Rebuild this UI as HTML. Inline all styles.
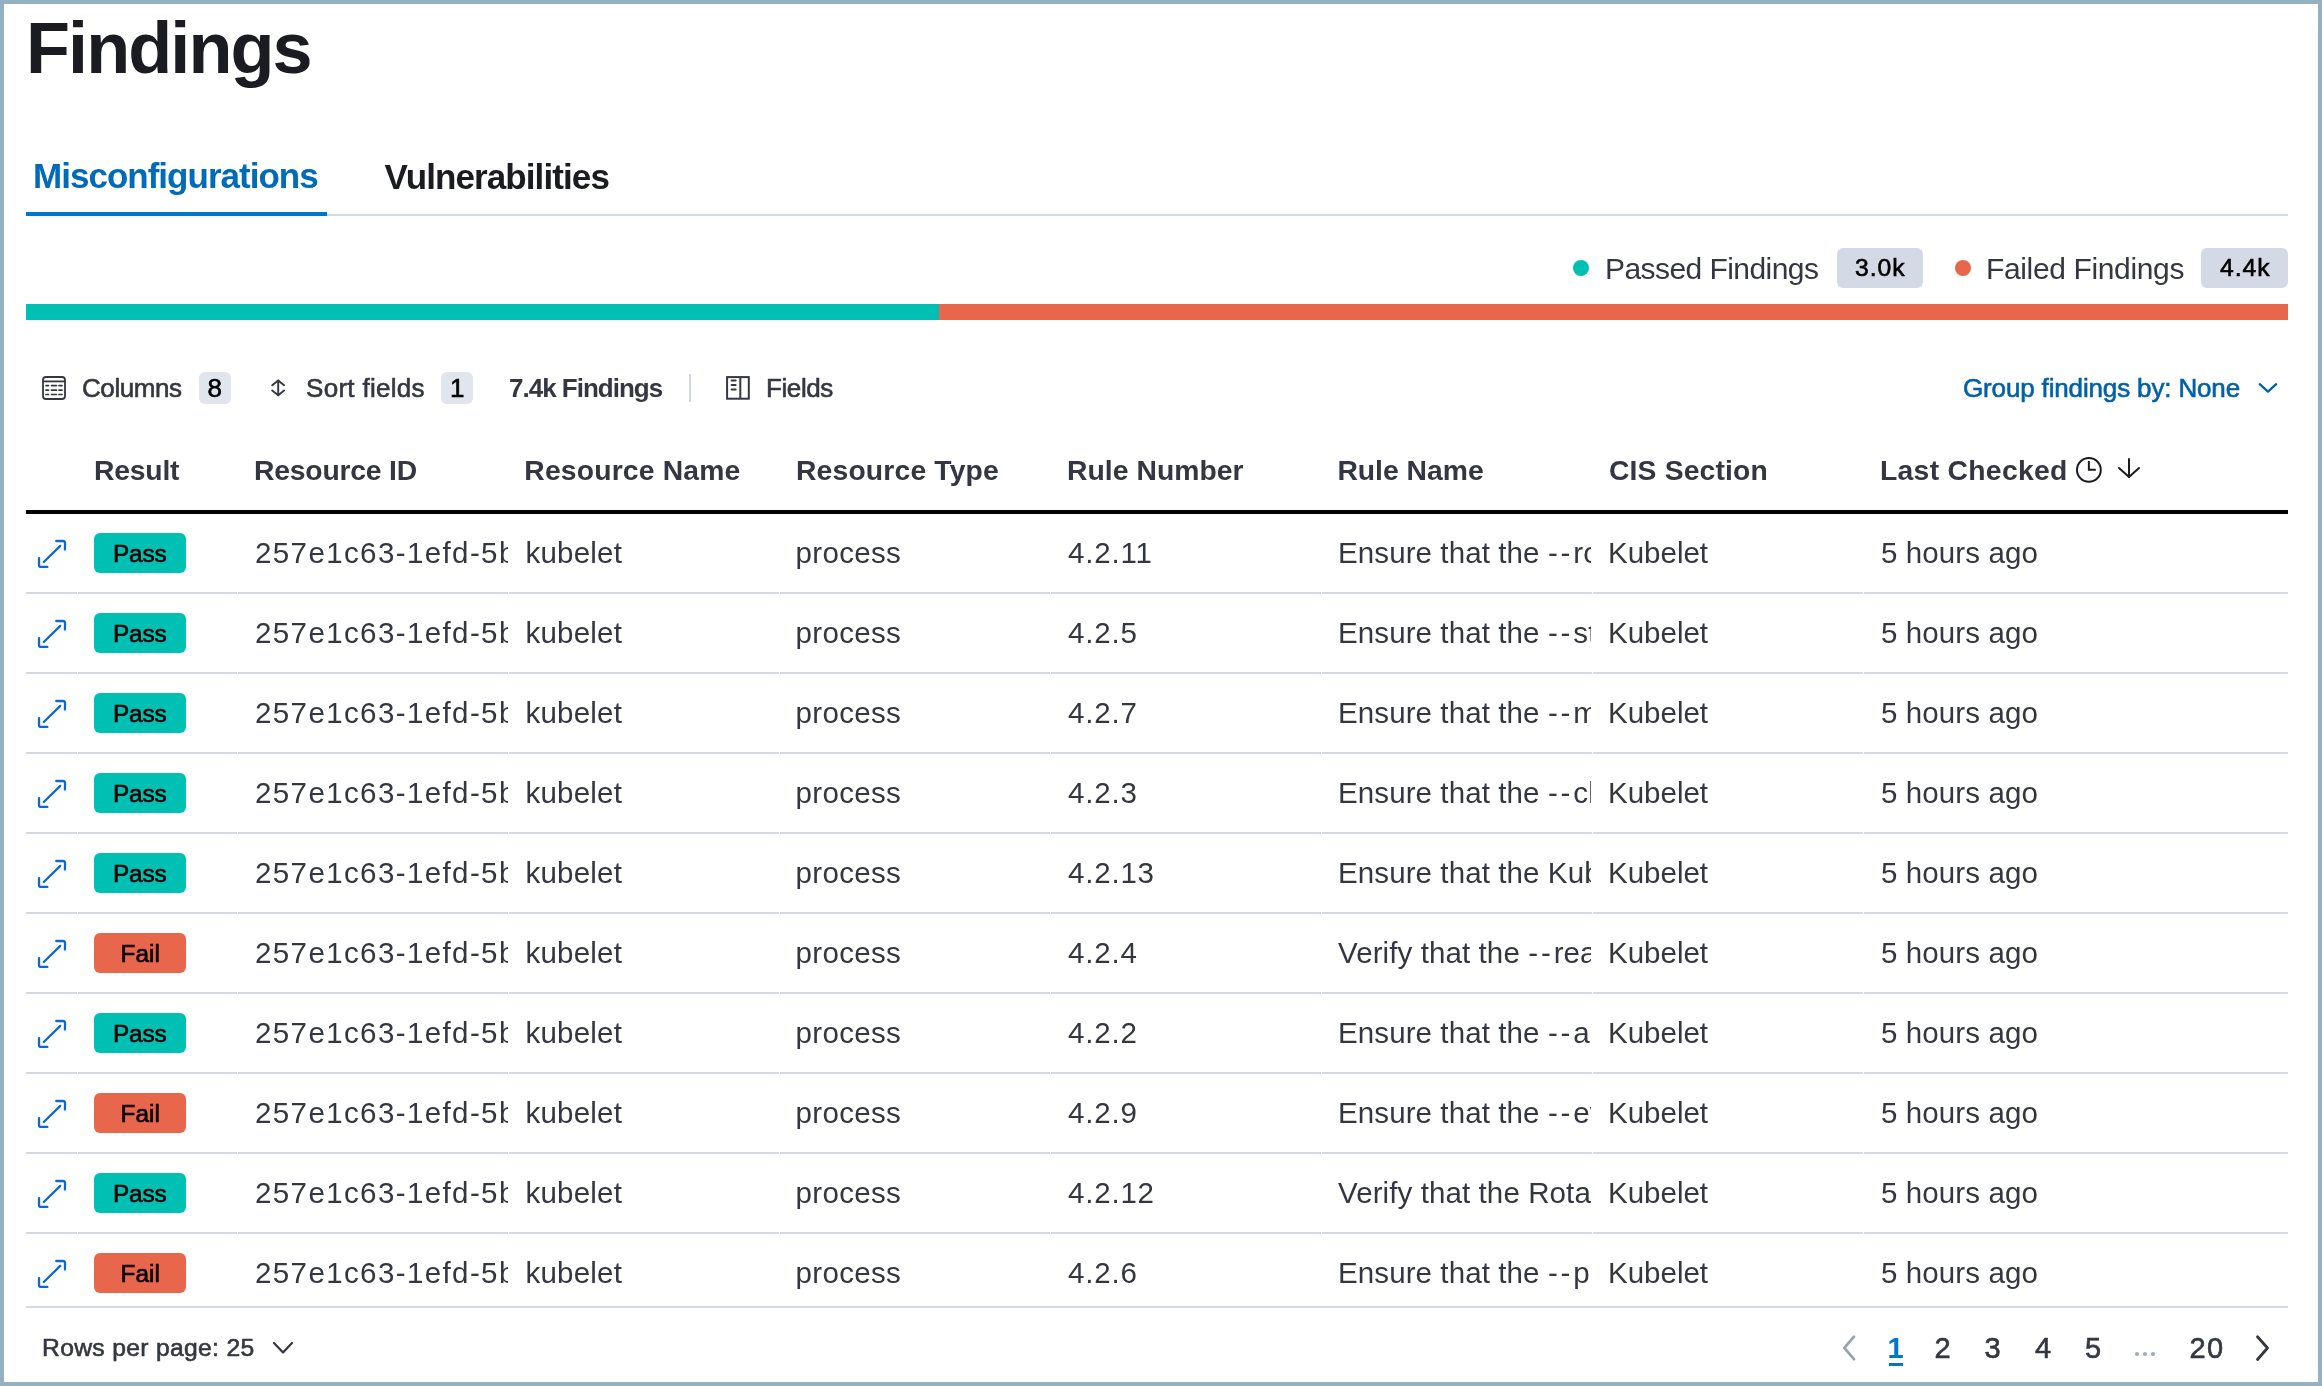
<!DOCTYPE html>
<html><head><meta charset="utf-8"><title>Findings</title>
<style>
html,body{margin:0;padding:0;background:#fff;}
body{width:2322px;height:1386px;position:relative;overflow:hidden;font-family:"Liberation Sans",sans-serif;}
.t{position:absolute;white-space:nowrap;}
.r{position:absolute;}
.clip{position:absolute;overflow:hidden;}
.frame{position:absolute;left:0;top:0;width:2314px;height:1378px;border:4px solid #94b1bf;pointer-events:none;}
</style></head><body>
<div style="position:absolute;left:0;top:0;width:2322px;height:1386px;will-change:transform">
<div class="t" style="left:26.0px;top:11.7px;font-size:72px;line-height:72px;font-weight:700;color:#1a1c21;letter-spacing:-1.9px;">Findings</div>
<div class="t" style="left:33.0px;top:158.4px;font-size:35px;line-height:35px;font-weight:700;color:#006bb8;letter-spacing:-0.98px;">Misconfigurations</div>
<div class="t" style="left:384.5px;top:158.8px;font-size:35px;line-height:35px;font-weight:700;color:#1a1c21;letter-spacing:-0.9px;">Vulnerabilities</div>
<div class="r" style="left:327px;top:214px;width:1961px;height:2px;background:#d3dae6;"></div>
<div class="r" style="left:26px;top:212px;width:301px;height:4px;background:#0077cc;"></div>
<div class="r" style="left:1573px;top:260px;width:16px;height:16px;border-radius:8px;background:#00bfb3"></div>
<div class="t" style="left:1605.0px;top:253.9px;font-size:30px;line-height:30px;font-weight:400;color:#343741;letter-spacing:-0.56px;">Passed Findings</div>
<div class="r" style="left:1837px;top:248px;width:86px;height:40px;background:#d3dae6;border-radius:6px"></div>
<div class="t" style="left:1855.0px;top:256.1px;font-size:24.7px;line-height:24.7px;font-weight:400;color:#000;letter-spacing:1px;-webkit-text-stroke:0.6px currentColor;">3.0k</div>
<div class="r" style="left:1955px;top:260px;width:16px;height:16px;border-radius:8px;background:#e7664c"></div>
<div class="t" style="left:1986.0px;top:253.9px;font-size:30px;line-height:30px;font-weight:400;color:#343741;letter-spacing:-0.36px;">Failed Findings</div>
<div class="r" style="left:2201px;top:248px;width:87px;height:40px;background:#d3dae6;border-radius:6px"></div>
<div class="t" style="left:2220.0px;top:256.1px;font-size:24.7px;line-height:24.7px;font-weight:400;color:#000;letter-spacing:1px;-webkit-text-stroke:0.6px currentColor;">4.4k</div>
<div class="r" style="left:26px;top:304px;width:913px;height:16px;background:#00bfb3;"></div>
<div class="r" style="left:939px;top:304px;width:1349px;height:16px;background:#e7664c;"></div>
<svg class="r" style="left:40px;top:374px" width="28" height="28" viewBox="0 0 28 28" fill="none" stroke="#343741" stroke-width="2">
<rect x="3" y="3" width="22" height="22" rx="3" stroke-width="1.8"/><line x1="3" y1="7.4" x2="25" y2="7.4" stroke-width="1.8"/>
<g stroke-width="1.7" stroke-linecap="round"><line x1="6" y1="11.6" x2="8.5" y2="11.6"/><line x1="11.5" y1="11.6" x2="16.5" y2="11.6"/><line x1="19" y1="11.6" x2="22" y2="11.6"/>
<line x1="6" y1="16.1" x2="8.5" y2="16.1"/><line x1="11.5" y1="16.1" x2="16.5" y2="16.1"/><line x1="19" y1="16.1" x2="22" y2="16.1"/>
<line x1="6" y1="20.5" x2="8.5" y2="20.5"/><line x1="11.5" y1="20.5" x2="16.5" y2="20.5"/><line x1="19" y1="20.5" x2="22" y2="20.5"/></g></svg>
<div class="t" style="left:82.0px;top:375.0px;font-size:26px;line-height:26px;font-weight:400;color:#343741;letter-spacing:-0.43px;-webkit-text-stroke:0.6px currentColor;">Columns</div>
<div class="r" style="left:199px;top:372px;width:32px;height:32px;background:#e0e5ee;border-radius:6px"></div>
<div class="t" style="left:207.5px;top:375.0px;font-size:26px;line-height:26px;font-weight:400;color:#000;letter-spacing:0px;-webkit-text-stroke:0.6px currentColor;">8</div>
<svg class="r" style="left:264px;top:374px" width="28" height="28" viewBox="0 0 28 28" fill="none" stroke="#343741" stroke-width="1.9" stroke-linecap="round" stroke-linejoin="round">
<polyline points="8.2,11.2 14.2,6.4 20.1,11.2"/><polyline points="8.2,16.4 14.2,21.2 20.1,16.4"/><line x1="14.2" y1="6.4" x2="14.2" y2="21.2"/></svg>
<div class="t" style="left:306.0px;top:375.0px;font-size:26px;line-height:26px;font-weight:400;color:#343741;letter-spacing:0.3px;-webkit-text-stroke:0.6px currentColor;">Sort fields</div>
<div class="r" style="left:441px;top:372px;width:32px;height:32px;background:#e0e5ee;border-radius:6px"></div>
<div class="t" style="left:450.0px;top:375.0px;font-size:26px;line-height:26px;font-weight:400;color:#000;letter-spacing:0px;-webkit-text-stroke:0.6px currentColor;">1</div>
<div class="t" style="left:509.0px;top:375.0px;font-size:26px;line-height:26px;font-weight:700;color:#343741;letter-spacing:-1px;">7.4k Findings</div>
<div class="r" style="left:689px;top:374px;width:2px;height:28px;background:#d3dae6;"></div>
<svg class="r" style="left:724px;top:374px" width="28" height="28" viewBox="0 0 28 28" fill="none" stroke="#343741" stroke-width="2">
<rect x="3.1" y="3.1" width="21.7" height="21.6"/><line x1="16.3" y1="3.1" x2="16.3" y2="24.7"/>
<g stroke-linecap="round"><line x1="7.6" y1="6.6" x2="11.6" y2="6.6"/><line x1="7.6" y1="10.9" x2="11.6" y2="10.9"/><line x1="7.6" y1="15.4" x2="11.6" y2="15.4"/></g></svg>
<div class="t" style="left:766.0px;top:375.0px;font-size:26px;line-height:26px;font-weight:400;color:#343741;letter-spacing:-0.4px;-webkit-text-stroke:0.6px currentColor;">Fields</div>
<div class="t" style="left:1963.0px;top:375.0px;font-size:26px;line-height:26px;font-weight:400;color:#0061a6;letter-spacing:-0.15px;-webkit-text-stroke:0.6px currentColor;">Group findings by: None</div>
<svg class="r" style="left:2250px;top:372px" width="40" height="32" viewBox="0 0 40 32" fill="none" stroke="#0061a6" stroke-width="2.3" stroke-linecap="round" stroke-linejoin="round">
<polyline points="9.7,12.2 18,19.6 26.2,12.2"/></svg>
<div class="t" style="left:94.0px;top:456.0px;font-size:28.3px;line-height:28.3px;font-weight:700;color:#343741;letter-spacing:-0.2px;">Result</div>
<div class="t" style="left:254.0px;top:456.0px;font-size:28.3px;line-height:28.3px;font-weight:700;color:#343741;letter-spacing:-0.2px;">Resource ID</div>
<div class="t" style="left:524.3px;top:456.0px;font-size:28.3px;line-height:28.3px;font-weight:700;color:#343741;letter-spacing:0.17px;">Resource Name</div>
<div class="t" style="left:796.0px;top:456.0px;font-size:28.3px;line-height:28.3px;font-weight:700;color:#343741;letter-spacing:0.17px;">Resource Type</div>
<div class="t" style="left:1067.0px;top:456.0px;font-size:28.3px;line-height:28.3px;font-weight:700;color:#343741;letter-spacing:0.05px;">Rule Number</div>
<div class="t" style="left:1337.4px;top:456.0px;font-size:28.3px;line-height:28.3px;font-weight:700;color:#343741;letter-spacing:0px;">Rule Name</div>
<div class="t" style="left:1609.0px;top:456.0px;font-size:28.3px;line-height:28.3px;font-weight:700;color:#343741;letter-spacing:0.15px;">CIS Section</div>
<div class="t" style="left:1880.0px;top:456.0px;font-size:28.3px;line-height:28.3px;font-weight:700;color:#343741;letter-spacing:0.3px;">Last Checked</div>
<svg class="r" style="left:2070px;top:450px" width="80" height="40" viewBox="0 0 80 40" fill="none" stroke="#1a1c21" stroke-width="2">
<circle cx="18.9" cy="19.9" r="11.9"/><polyline points="18.9,11 18.9,19.8 25.8,19.8" stroke-width="2"/>
<g stroke="#1a1c21" stroke-width="2" stroke-linecap="round" stroke-linejoin="round"><line x1="59" y1="9" x2="59" y2="27"/><polyline points="49,18 59,27 69,18"/></g></svg>
<div class="r" style="left:26px;top:510px;width:2262px;height:4px;background:#000;"></div>
<div class="r" style="left:26px;top:592px;width:51px;height:2px;background:#d3dae6;"></div>
<div class="r" style="left:78px;top:592px;width:159px;height:2px;background:#d3dae6;"></div>
<div class="r" style="left:238px;top:592px;width:270px;height:2px;background:#d3dae6;"></div>
<div class="r" style="left:509px;top:592px;width:270px;height:2px;background:#d3dae6;"></div>
<div class="r" style="left:780px;top:592px;width:270px;height:2px;background:#d3dae6;"></div>
<div class="r" style="left:1051px;top:592px;width:270px;height:2px;background:#d3dae6;"></div>
<div class="r" style="left:1322px;top:592px;width:270px;height:2px;background:#d3dae6;"></div>
<div class="r" style="left:1593px;top:592px;width:270px;height:2px;background:#d3dae6;"></div>
<div class="r" style="left:1864px;top:592px;width:424px;height:2px;background:#d3dae6;"></div>
<svg class="r" style="left:32px;top:530px" width="40" height="46" viewBox="0 0 40 46" fill="none" stroke="#0b6bcb" stroke-width="2.3" stroke-linecap="round" stroke-linejoin="round">
<path d="M24.3 11 H31 Q33 11 33 13 V19.6"/><path d="M7 28.2 V34.9 Q7 36.9 9 36.9 H15.4"/><line x1="11.8" y1="32" x2="28.2" y2="15.9"/></svg>
<div class="r" style="left:94px;top:533px;width:92px;height:40px;background:#00bfb3;border-radius:6px"></div>
<div class="t" style="left:113.0px;top:541.6px;font-size:24.4px;line-height:24.4px;font-weight:400;color:#000;letter-spacing:-0.15px;-webkit-text-stroke:0.6px #000;">Pass</div>
<div class="clip" style="left:237px;top:514px;width:271px;height:78px">
<div class="t" style="left:18.0px;top:23.7px;font-size:29.5px;line-height:29.5px;font-weight:400;color:#343741;letter-spacing:1.39px;">257e1c63-1efd-5b1f-9f6b-0123456789ab</div>
</div>
<div class="t" style="left:525.5px;top:537.7px;font-size:29.5px;line-height:29.5px;font-weight:400;color:#343741;letter-spacing:0.2px;">kubelet</div>
<div class="t" style="left:795.5px;top:537.7px;font-size:29.5px;line-height:29.5px;font-weight:400;color:#343741;letter-spacing:0.33px;">process</div>
<div class="t" style="left:1068.0px;top:537.7px;font-size:29.5px;line-height:29.5px;font-weight:400;color:#343741;letter-spacing:0.8px;">4.2.11</div>
<div class="clip" style="left:1321px;top:514px;width:270px;height:78px">
<div class="t" style="left:17.0px;top:23.7px;font-size:29.5px;line-height:29.5px;font-weight:400;color:#343741;letter-spacing:0.1px;">Ensure that the <span style="letter-spacing:2.9px">--</span>rotate-certificates argument is not set to false</div>
</div>
<div class="t" style="left:1608.0px;top:537.7px;font-size:29.5px;line-height:29.5px;font-weight:400;color:#343741;letter-spacing:0px;">Kubelet</div>
<div class="t" style="left:1881.0px;top:537.7px;font-size:29.5px;line-height:29.5px;font-weight:400;color:#343741;letter-spacing:0.1px;">5 hours ago</div>
<div class="r" style="left:26px;top:672px;width:51px;height:2px;background:#d3dae6;"></div>
<div class="r" style="left:78px;top:672px;width:159px;height:2px;background:#d3dae6;"></div>
<div class="r" style="left:238px;top:672px;width:270px;height:2px;background:#d3dae6;"></div>
<div class="r" style="left:509px;top:672px;width:270px;height:2px;background:#d3dae6;"></div>
<div class="r" style="left:780px;top:672px;width:270px;height:2px;background:#d3dae6;"></div>
<div class="r" style="left:1051px;top:672px;width:270px;height:2px;background:#d3dae6;"></div>
<div class="r" style="left:1322px;top:672px;width:270px;height:2px;background:#d3dae6;"></div>
<div class="r" style="left:1593px;top:672px;width:270px;height:2px;background:#d3dae6;"></div>
<div class="r" style="left:1864px;top:672px;width:424px;height:2px;background:#d3dae6;"></div>
<svg class="r" style="left:32px;top:610px" width="40" height="46" viewBox="0 0 40 46" fill="none" stroke="#0b6bcb" stroke-width="2.3" stroke-linecap="round" stroke-linejoin="round">
<path d="M24.3 11 H31 Q33 11 33 13 V19.6"/><path d="M7 28.2 V34.9 Q7 36.9 9 36.9 H15.4"/><line x1="11.8" y1="32" x2="28.2" y2="15.9"/></svg>
<div class="r" style="left:94px;top:613px;width:92px;height:40px;background:#00bfb3;border-radius:6px"></div>
<div class="t" style="left:113.0px;top:621.6px;font-size:24.4px;line-height:24.4px;font-weight:400;color:#000;letter-spacing:-0.15px;-webkit-text-stroke:0.6px #000;">Pass</div>
<div class="clip" style="left:237px;top:594px;width:271px;height:78px">
<div class="t" style="left:18.0px;top:23.7px;font-size:29.5px;line-height:29.5px;font-weight:400;color:#343741;letter-spacing:1.39px;">257e1c63-1efd-5b1f-9f6b-0123456789ab</div>
</div>
<div class="t" style="left:525.5px;top:617.7px;font-size:29.5px;line-height:29.5px;font-weight:400;color:#343741;letter-spacing:0.2px;">kubelet</div>
<div class="t" style="left:795.5px;top:617.7px;font-size:29.5px;line-height:29.5px;font-weight:400;color:#343741;letter-spacing:0.33px;">process</div>
<div class="t" style="left:1068.0px;top:617.7px;font-size:29.5px;line-height:29.5px;font-weight:400;color:#343741;letter-spacing:0.8px;">4.2.5</div>
<div class="clip" style="left:1321px;top:594px;width:270px;height:78px">
<div class="t" style="left:17.0px;top:23.7px;font-size:29.5px;line-height:29.5px;font-weight:400;color:#343741;letter-spacing:0.1px;">Ensure that the <span style="letter-spacing:2.9px">--</span>streaming-connection-idle-timeout argument is not set to 0</div>
</div>
<div class="t" style="left:1608.0px;top:617.7px;font-size:29.5px;line-height:29.5px;font-weight:400;color:#343741;letter-spacing:0px;">Kubelet</div>
<div class="t" style="left:1881.0px;top:617.7px;font-size:29.5px;line-height:29.5px;font-weight:400;color:#343741;letter-spacing:0.1px;">5 hours ago</div>
<div class="r" style="left:26px;top:752px;width:51px;height:2px;background:#d3dae6;"></div>
<div class="r" style="left:78px;top:752px;width:159px;height:2px;background:#d3dae6;"></div>
<div class="r" style="left:238px;top:752px;width:270px;height:2px;background:#d3dae6;"></div>
<div class="r" style="left:509px;top:752px;width:270px;height:2px;background:#d3dae6;"></div>
<div class="r" style="left:780px;top:752px;width:270px;height:2px;background:#d3dae6;"></div>
<div class="r" style="left:1051px;top:752px;width:270px;height:2px;background:#d3dae6;"></div>
<div class="r" style="left:1322px;top:752px;width:270px;height:2px;background:#d3dae6;"></div>
<div class="r" style="left:1593px;top:752px;width:270px;height:2px;background:#d3dae6;"></div>
<div class="r" style="left:1864px;top:752px;width:424px;height:2px;background:#d3dae6;"></div>
<svg class="r" style="left:32px;top:690px" width="40" height="46" viewBox="0 0 40 46" fill="none" stroke="#0b6bcb" stroke-width="2.3" stroke-linecap="round" stroke-linejoin="round">
<path d="M24.3 11 H31 Q33 11 33 13 V19.6"/><path d="M7 28.2 V34.9 Q7 36.9 9 36.9 H15.4"/><line x1="11.8" y1="32" x2="28.2" y2="15.9"/></svg>
<div class="r" style="left:94px;top:693px;width:92px;height:40px;background:#00bfb3;border-radius:6px"></div>
<div class="t" style="left:113.0px;top:701.6px;font-size:24.4px;line-height:24.4px;font-weight:400;color:#000;letter-spacing:-0.15px;-webkit-text-stroke:0.6px #000;">Pass</div>
<div class="clip" style="left:237px;top:674px;width:271px;height:78px">
<div class="t" style="left:18.0px;top:23.7px;font-size:29.5px;line-height:29.5px;font-weight:400;color:#343741;letter-spacing:1.39px;">257e1c63-1efd-5b1f-9f6b-0123456789ab</div>
</div>
<div class="t" style="left:525.5px;top:697.7px;font-size:29.5px;line-height:29.5px;font-weight:400;color:#343741;letter-spacing:0.2px;">kubelet</div>
<div class="t" style="left:795.5px;top:697.7px;font-size:29.5px;line-height:29.5px;font-weight:400;color:#343741;letter-spacing:0.33px;">process</div>
<div class="t" style="left:1068.0px;top:697.7px;font-size:29.5px;line-height:29.5px;font-weight:400;color:#343741;letter-spacing:0.8px;">4.2.7</div>
<div class="clip" style="left:1321px;top:674px;width:270px;height:78px">
<div class="t" style="left:17.0px;top:23.7px;font-size:29.5px;line-height:29.5px;font-weight:400;color:#343741;letter-spacing:0.1px;">Ensure that the <span style="letter-spacing:2.9px">--</span>make-iptables-util-chains argument is set to true</div>
</div>
<div class="t" style="left:1608.0px;top:697.7px;font-size:29.5px;line-height:29.5px;font-weight:400;color:#343741;letter-spacing:0px;">Kubelet</div>
<div class="t" style="left:1881.0px;top:697.7px;font-size:29.5px;line-height:29.5px;font-weight:400;color:#343741;letter-spacing:0.1px;">5 hours ago</div>
<div class="r" style="left:26px;top:832px;width:51px;height:2px;background:#d3dae6;"></div>
<div class="r" style="left:78px;top:832px;width:159px;height:2px;background:#d3dae6;"></div>
<div class="r" style="left:238px;top:832px;width:270px;height:2px;background:#d3dae6;"></div>
<div class="r" style="left:509px;top:832px;width:270px;height:2px;background:#d3dae6;"></div>
<div class="r" style="left:780px;top:832px;width:270px;height:2px;background:#d3dae6;"></div>
<div class="r" style="left:1051px;top:832px;width:270px;height:2px;background:#d3dae6;"></div>
<div class="r" style="left:1322px;top:832px;width:270px;height:2px;background:#d3dae6;"></div>
<div class="r" style="left:1593px;top:832px;width:270px;height:2px;background:#d3dae6;"></div>
<div class="r" style="left:1864px;top:832px;width:424px;height:2px;background:#d3dae6;"></div>
<svg class="r" style="left:32px;top:770px" width="40" height="46" viewBox="0 0 40 46" fill="none" stroke="#0b6bcb" stroke-width="2.3" stroke-linecap="round" stroke-linejoin="round">
<path d="M24.3 11 H31 Q33 11 33 13 V19.6"/><path d="M7 28.2 V34.9 Q7 36.9 9 36.9 H15.4"/><line x1="11.8" y1="32" x2="28.2" y2="15.9"/></svg>
<div class="r" style="left:94px;top:773px;width:92px;height:40px;background:#00bfb3;border-radius:6px"></div>
<div class="t" style="left:113.0px;top:781.6px;font-size:24.4px;line-height:24.4px;font-weight:400;color:#000;letter-spacing:-0.15px;-webkit-text-stroke:0.6px #000;">Pass</div>
<div class="clip" style="left:237px;top:754px;width:271px;height:78px">
<div class="t" style="left:18.0px;top:23.7px;font-size:29.5px;line-height:29.5px;font-weight:400;color:#343741;letter-spacing:1.39px;">257e1c63-1efd-5b1f-9f6b-0123456789ab</div>
</div>
<div class="t" style="left:525.5px;top:777.7px;font-size:29.5px;line-height:29.5px;font-weight:400;color:#343741;letter-spacing:0.2px;">kubelet</div>
<div class="t" style="left:795.5px;top:777.7px;font-size:29.5px;line-height:29.5px;font-weight:400;color:#343741;letter-spacing:0.33px;">process</div>
<div class="t" style="left:1068.0px;top:777.7px;font-size:29.5px;line-height:29.5px;font-weight:400;color:#343741;letter-spacing:0.8px;">4.2.3</div>
<div class="clip" style="left:1321px;top:754px;width:270px;height:78px">
<div class="t" style="left:17.0px;top:23.7px;font-size:29.5px;line-height:29.5px;font-weight:400;color:#343741;letter-spacing:0.1px;">Ensure that the <span style="letter-spacing:2.9px">--</span>client-ca-file argument is set as appropriate</div>
</div>
<div class="t" style="left:1608.0px;top:777.7px;font-size:29.5px;line-height:29.5px;font-weight:400;color:#343741;letter-spacing:0px;">Kubelet</div>
<div class="t" style="left:1881.0px;top:777.7px;font-size:29.5px;line-height:29.5px;font-weight:400;color:#343741;letter-spacing:0.1px;">5 hours ago</div>
<div class="r" style="left:26px;top:912px;width:51px;height:2px;background:#d3dae6;"></div>
<div class="r" style="left:78px;top:912px;width:159px;height:2px;background:#d3dae6;"></div>
<div class="r" style="left:238px;top:912px;width:270px;height:2px;background:#d3dae6;"></div>
<div class="r" style="left:509px;top:912px;width:270px;height:2px;background:#d3dae6;"></div>
<div class="r" style="left:780px;top:912px;width:270px;height:2px;background:#d3dae6;"></div>
<div class="r" style="left:1051px;top:912px;width:270px;height:2px;background:#d3dae6;"></div>
<div class="r" style="left:1322px;top:912px;width:270px;height:2px;background:#d3dae6;"></div>
<div class="r" style="left:1593px;top:912px;width:270px;height:2px;background:#d3dae6;"></div>
<div class="r" style="left:1864px;top:912px;width:424px;height:2px;background:#d3dae6;"></div>
<svg class="r" style="left:32px;top:850px" width="40" height="46" viewBox="0 0 40 46" fill="none" stroke="#0b6bcb" stroke-width="2.3" stroke-linecap="round" stroke-linejoin="round">
<path d="M24.3 11 H31 Q33 11 33 13 V19.6"/><path d="M7 28.2 V34.9 Q7 36.9 9 36.9 H15.4"/><line x1="11.8" y1="32" x2="28.2" y2="15.9"/></svg>
<div class="r" style="left:94px;top:853px;width:92px;height:40px;background:#00bfb3;border-radius:6px"></div>
<div class="t" style="left:113.0px;top:861.6px;font-size:24.4px;line-height:24.4px;font-weight:400;color:#000;letter-spacing:-0.15px;-webkit-text-stroke:0.6px #000;">Pass</div>
<div class="clip" style="left:237px;top:834px;width:271px;height:78px">
<div class="t" style="left:18.0px;top:23.7px;font-size:29.5px;line-height:29.5px;font-weight:400;color:#343741;letter-spacing:1.39px;">257e1c63-1efd-5b1f-9f6b-0123456789ab</div>
</div>
<div class="t" style="left:525.5px;top:857.7px;font-size:29.5px;line-height:29.5px;font-weight:400;color:#343741;letter-spacing:0.2px;">kubelet</div>
<div class="t" style="left:795.5px;top:857.7px;font-size:29.5px;line-height:29.5px;font-weight:400;color:#343741;letter-spacing:0.33px;">process</div>
<div class="t" style="left:1068.0px;top:857.7px;font-size:29.5px;line-height:29.5px;font-weight:400;color:#343741;letter-spacing:0.8px;">4.2.13</div>
<div class="clip" style="left:1321px;top:834px;width:270px;height:78px">
<div class="t" style="left:17.0px;top:23.7px;font-size:29.5px;line-height:29.5px;font-weight:400;color:#343741;letter-spacing:0.1px;">Ensure that the Kubelet only makes use of Strong Cryptographic Ciphers</div>
</div>
<div class="t" style="left:1608.0px;top:857.7px;font-size:29.5px;line-height:29.5px;font-weight:400;color:#343741;letter-spacing:0px;">Kubelet</div>
<div class="t" style="left:1881.0px;top:857.7px;font-size:29.5px;line-height:29.5px;font-weight:400;color:#343741;letter-spacing:0.1px;">5 hours ago</div>
<div class="r" style="left:26px;top:992px;width:51px;height:2px;background:#d3dae6;"></div>
<div class="r" style="left:78px;top:992px;width:159px;height:2px;background:#d3dae6;"></div>
<div class="r" style="left:238px;top:992px;width:270px;height:2px;background:#d3dae6;"></div>
<div class="r" style="left:509px;top:992px;width:270px;height:2px;background:#d3dae6;"></div>
<div class="r" style="left:780px;top:992px;width:270px;height:2px;background:#d3dae6;"></div>
<div class="r" style="left:1051px;top:992px;width:270px;height:2px;background:#d3dae6;"></div>
<div class="r" style="left:1322px;top:992px;width:270px;height:2px;background:#d3dae6;"></div>
<div class="r" style="left:1593px;top:992px;width:270px;height:2px;background:#d3dae6;"></div>
<div class="r" style="left:1864px;top:992px;width:424px;height:2px;background:#d3dae6;"></div>
<svg class="r" style="left:32px;top:930px" width="40" height="46" viewBox="0 0 40 46" fill="none" stroke="#0b6bcb" stroke-width="2.3" stroke-linecap="round" stroke-linejoin="round">
<path d="M24.3 11 H31 Q33 11 33 13 V19.6"/><path d="M7 28.2 V34.9 Q7 36.9 9 36.9 H15.4"/><line x1="11.8" y1="32" x2="28.2" y2="15.9"/></svg>
<div class="r" style="left:94px;top:933px;width:92px;height:40px;background:#e7664c;border-radius:6px"></div>
<div class="t" style="left:120.5px;top:941.6px;font-size:24.4px;line-height:24.4px;font-weight:400;color:#000;letter-spacing:0.05px;-webkit-text-stroke:0.6px #000;">Fail</div>
<div class="clip" style="left:237px;top:914px;width:271px;height:78px">
<div class="t" style="left:18.0px;top:23.7px;font-size:29.5px;line-height:29.5px;font-weight:400;color:#343741;letter-spacing:1.39px;">257e1c63-1efd-5b1f-9f6b-0123456789ab</div>
</div>
<div class="t" style="left:525.5px;top:937.7px;font-size:29.5px;line-height:29.5px;font-weight:400;color:#343741;letter-spacing:0.2px;">kubelet</div>
<div class="t" style="left:795.5px;top:937.7px;font-size:29.5px;line-height:29.5px;font-weight:400;color:#343741;letter-spacing:0.33px;">process</div>
<div class="t" style="left:1068.0px;top:937.7px;font-size:29.5px;line-height:29.5px;font-weight:400;color:#343741;letter-spacing:0.8px;">4.2.4</div>
<div class="clip" style="left:1321px;top:914px;width:270px;height:78px">
<div class="t" style="left:17.0px;top:23.7px;font-size:29.5px;line-height:29.5px;font-weight:400;color:#343741;letter-spacing:0.1px;">Verify that the <span style="letter-spacing:2.9px">--</span>read-only-port argument is set to 0</div>
</div>
<div class="t" style="left:1608.0px;top:937.7px;font-size:29.5px;line-height:29.5px;font-weight:400;color:#343741;letter-spacing:0px;">Kubelet</div>
<div class="t" style="left:1881.0px;top:937.7px;font-size:29.5px;line-height:29.5px;font-weight:400;color:#343741;letter-spacing:0.1px;">5 hours ago</div>
<div class="r" style="left:26px;top:1072px;width:51px;height:2px;background:#d3dae6;"></div>
<div class="r" style="left:78px;top:1072px;width:159px;height:2px;background:#d3dae6;"></div>
<div class="r" style="left:238px;top:1072px;width:270px;height:2px;background:#d3dae6;"></div>
<div class="r" style="left:509px;top:1072px;width:270px;height:2px;background:#d3dae6;"></div>
<div class="r" style="left:780px;top:1072px;width:270px;height:2px;background:#d3dae6;"></div>
<div class="r" style="left:1051px;top:1072px;width:270px;height:2px;background:#d3dae6;"></div>
<div class="r" style="left:1322px;top:1072px;width:270px;height:2px;background:#d3dae6;"></div>
<div class="r" style="left:1593px;top:1072px;width:270px;height:2px;background:#d3dae6;"></div>
<div class="r" style="left:1864px;top:1072px;width:424px;height:2px;background:#d3dae6;"></div>
<svg class="r" style="left:32px;top:1010px" width="40" height="46" viewBox="0 0 40 46" fill="none" stroke="#0b6bcb" stroke-width="2.3" stroke-linecap="round" stroke-linejoin="round">
<path d="M24.3 11 H31 Q33 11 33 13 V19.6"/><path d="M7 28.2 V34.9 Q7 36.9 9 36.9 H15.4"/><line x1="11.8" y1="32" x2="28.2" y2="15.9"/></svg>
<div class="r" style="left:94px;top:1013px;width:92px;height:40px;background:#00bfb3;border-radius:6px"></div>
<div class="t" style="left:113.0px;top:1021.6px;font-size:24.4px;line-height:24.4px;font-weight:400;color:#000;letter-spacing:-0.15px;-webkit-text-stroke:0.6px #000;">Pass</div>
<div class="clip" style="left:237px;top:994px;width:271px;height:78px">
<div class="t" style="left:18.0px;top:23.7px;font-size:29.5px;line-height:29.5px;font-weight:400;color:#343741;letter-spacing:1.39px;">257e1c63-1efd-5b1f-9f6b-0123456789ab</div>
</div>
<div class="t" style="left:525.5px;top:1017.7px;font-size:29.5px;line-height:29.5px;font-weight:400;color:#343741;letter-spacing:0.2px;">kubelet</div>
<div class="t" style="left:795.5px;top:1017.7px;font-size:29.5px;line-height:29.5px;font-weight:400;color:#343741;letter-spacing:0.33px;">process</div>
<div class="t" style="left:1068.0px;top:1017.7px;font-size:29.5px;line-height:29.5px;font-weight:400;color:#343741;letter-spacing:0.8px;">4.2.2</div>
<div class="clip" style="left:1321px;top:994px;width:270px;height:78px">
<div class="t" style="left:17.0px;top:23.7px;font-size:29.5px;line-height:29.5px;font-weight:400;color:#343741;letter-spacing:0.1px;">Ensure that the <span style="letter-spacing:2.9px">--</span>authorization-mode argument is not set to AlwaysAllow</div>
</div>
<div class="t" style="left:1608.0px;top:1017.7px;font-size:29.5px;line-height:29.5px;font-weight:400;color:#343741;letter-spacing:0px;">Kubelet</div>
<div class="t" style="left:1881.0px;top:1017.7px;font-size:29.5px;line-height:29.5px;font-weight:400;color:#343741;letter-spacing:0.1px;">5 hours ago</div>
<div class="r" style="left:26px;top:1152px;width:51px;height:2px;background:#d3dae6;"></div>
<div class="r" style="left:78px;top:1152px;width:159px;height:2px;background:#d3dae6;"></div>
<div class="r" style="left:238px;top:1152px;width:270px;height:2px;background:#d3dae6;"></div>
<div class="r" style="left:509px;top:1152px;width:270px;height:2px;background:#d3dae6;"></div>
<div class="r" style="left:780px;top:1152px;width:270px;height:2px;background:#d3dae6;"></div>
<div class="r" style="left:1051px;top:1152px;width:270px;height:2px;background:#d3dae6;"></div>
<div class="r" style="left:1322px;top:1152px;width:270px;height:2px;background:#d3dae6;"></div>
<div class="r" style="left:1593px;top:1152px;width:270px;height:2px;background:#d3dae6;"></div>
<div class="r" style="left:1864px;top:1152px;width:424px;height:2px;background:#d3dae6;"></div>
<svg class="r" style="left:32px;top:1090px" width="40" height="46" viewBox="0 0 40 46" fill="none" stroke="#0b6bcb" stroke-width="2.3" stroke-linecap="round" stroke-linejoin="round">
<path d="M24.3 11 H31 Q33 11 33 13 V19.6"/><path d="M7 28.2 V34.9 Q7 36.9 9 36.9 H15.4"/><line x1="11.8" y1="32" x2="28.2" y2="15.9"/></svg>
<div class="r" style="left:94px;top:1093px;width:92px;height:40px;background:#e7664c;border-radius:6px"></div>
<div class="t" style="left:120.5px;top:1101.6px;font-size:24.4px;line-height:24.4px;font-weight:400;color:#000;letter-spacing:0.05px;-webkit-text-stroke:0.6px #000;">Fail</div>
<div class="clip" style="left:237px;top:1074px;width:271px;height:78px">
<div class="t" style="left:18.0px;top:23.7px;font-size:29.5px;line-height:29.5px;font-weight:400;color:#343741;letter-spacing:1.39px;">257e1c63-1efd-5b1f-9f6b-0123456789ab</div>
</div>
<div class="t" style="left:525.5px;top:1097.7px;font-size:29.5px;line-height:29.5px;font-weight:400;color:#343741;letter-spacing:0.2px;">kubelet</div>
<div class="t" style="left:795.5px;top:1097.7px;font-size:29.5px;line-height:29.5px;font-weight:400;color:#343741;letter-spacing:0.33px;">process</div>
<div class="t" style="left:1068.0px;top:1097.7px;font-size:29.5px;line-height:29.5px;font-weight:400;color:#343741;letter-spacing:0.8px;">4.2.9</div>
<div class="clip" style="left:1321px;top:1074px;width:270px;height:78px">
<div class="t" style="left:17.0px;top:23.7px;font-size:29.5px;line-height:29.5px;font-weight:400;color:#343741;letter-spacing:0.1px;">Ensure that the <span style="letter-spacing:2.9px">--</span>event-qps argument is set to 0 or a level which ensures appropriate event capture</div>
</div>
<div class="t" style="left:1608.0px;top:1097.7px;font-size:29.5px;line-height:29.5px;font-weight:400;color:#343741;letter-spacing:0px;">Kubelet</div>
<div class="t" style="left:1881.0px;top:1097.7px;font-size:29.5px;line-height:29.5px;font-weight:400;color:#343741;letter-spacing:0.1px;">5 hours ago</div>
<div class="r" style="left:26px;top:1232px;width:51px;height:2px;background:#d3dae6;"></div>
<div class="r" style="left:78px;top:1232px;width:159px;height:2px;background:#d3dae6;"></div>
<div class="r" style="left:238px;top:1232px;width:270px;height:2px;background:#d3dae6;"></div>
<div class="r" style="left:509px;top:1232px;width:270px;height:2px;background:#d3dae6;"></div>
<div class="r" style="left:780px;top:1232px;width:270px;height:2px;background:#d3dae6;"></div>
<div class="r" style="left:1051px;top:1232px;width:270px;height:2px;background:#d3dae6;"></div>
<div class="r" style="left:1322px;top:1232px;width:270px;height:2px;background:#d3dae6;"></div>
<div class="r" style="left:1593px;top:1232px;width:270px;height:2px;background:#d3dae6;"></div>
<div class="r" style="left:1864px;top:1232px;width:424px;height:2px;background:#d3dae6;"></div>
<svg class="r" style="left:32px;top:1170px" width="40" height="46" viewBox="0 0 40 46" fill="none" stroke="#0b6bcb" stroke-width="2.3" stroke-linecap="round" stroke-linejoin="round">
<path d="M24.3 11 H31 Q33 11 33 13 V19.6"/><path d="M7 28.2 V34.9 Q7 36.9 9 36.9 H15.4"/><line x1="11.8" y1="32" x2="28.2" y2="15.9"/></svg>
<div class="r" style="left:94px;top:1173px;width:92px;height:40px;background:#00bfb3;border-radius:6px"></div>
<div class="t" style="left:113.0px;top:1181.6px;font-size:24.4px;line-height:24.4px;font-weight:400;color:#000;letter-spacing:-0.15px;-webkit-text-stroke:0.6px #000;">Pass</div>
<div class="clip" style="left:237px;top:1154px;width:271px;height:78px">
<div class="t" style="left:18.0px;top:23.7px;font-size:29.5px;line-height:29.5px;font-weight:400;color:#343741;letter-spacing:1.39px;">257e1c63-1efd-5b1f-9f6b-0123456789ab</div>
</div>
<div class="t" style="left:525.5px;top:1177.7px;font-size:29.5px;line-height:29.5px;font-weight:400;color:#343741;letter-spacing:0.2px;">kubelet</div>
<div class="t" style="left:795.5px;top:1177.7px;font-size:29.5px;line-height:29.5px;font-weight:400;color:#343741;letter-spacing:0.33px;">process</div>
<div class="t" style="left:1068.0px;top:1177.7px;font-size:29.5px;line-height:29.5px;font-weight:400;color:#343741;letter-spacing:0.8px;">4.2.12</div>
<div class="clip" style="left:1321px;top:1154px;width:270px;height:78px">
<div class="t" style="left:17.0px;top:23.7px;font-size:29.5px;line-height:29.5px;font-weight:400;color:#343741;letter-spacing:0.1px;">Verify that the RotateKubeletServerCertificate argument is set to true</div>
</div>
<div class="t" style="left:1608.0px;top:1177.7px;font-size:29.5px;line-height:29.5px;font-weight:400;color:#343741;letter-spacing:0px;">Kubelet</div>
<div class="t" style="left:1881.0px;top:1177.7px;font-size:29.5px;line-height:29.5px;font-weight:400;color:#343741;letter-spacing:0.1px;">5 hours ago</div>
<svg class="r" style="left:32px;top:1250px" width="40" height="46" viewBox="0 0 40 46" fill="none" stroke="#0b6bcb" stroke-width="2.3" stroke-linecap="round" stroke-linejoin="round">
<path d="M24.3 11 H31 Q33 11 33 13 V19.6"/><path d="M7 28.2 V34.9 Q7 36.9 9 36.9 H15.4"/><line x1="11.8" y1="32" x2="28.2" y2="15.9"/></svg>
<div class="r" style="left:94px;top:1253px;width:92px;height:40px;background:#e7664c;border-radius:6px"></div>
<div class="t" style="left:120.5px;top:1261.6px;font-size:24.4px;line-height:24.4px;font-weight:400;color:#000;letter-spacing:0.05px;-webkit-text-stroke:0.6px #000;">Fail</div>
<div class="clip" style="left:237px;top:1234px;width:271px;height:78px">
<div class="t" style="left:18.0px;top:23.7px;font-size:29.5px;line-height:29.5px;font-weight:400;color:#343741;letter-spacing:1.39px;">257e1c63-1efd-5b1f-9f6b-0123456789ab</div>
</div>
<div class="t" style="left:525.5px;top:1257.7px;font-size:29.5px;line-height:29.5px;font-weight:400;color:#343741;letter-spacing:0.2px;">kubelet</div>
<div class="t" style="left:795.5px;top:1257.7px;font-size:29.5px;line-height:29.5px;font-weight:400;color:#343741;letter-spacing:0.33px;">process</div>
<div class="t" style="left:1068.0px;top:1257.7px;font-size:29.5px;line-height:29.5px;font-weight:400;color:#343741;letter-spacing:0.8px;">4.2.6</div>
<div class="clip" style="left:1321px;top:1234px;width:270px;height:78px">
<div class="t" style="left:17.0px;top:23.7px;font-size:29.5px;line-height:29.5px;font-weight:400;color:#343741;letter-spacing:0.1px;">Ensure that the <span style="letter-spacing:2.9px">--</span>protect-kernel-defaults argument is set to true</div>
</div>
<div class="t" style="left:1608.0px;top:1257.7px;font-size:29.5px;line-height:29.5px;font-weight:400;color:#343741;letter-spacing:0px;">Kubelet</div>
<div class="t" style="left:1881.0px;top:1257.7px;font-size:29.5px;line-height:29.5px;font-weight:400;color:#343741;letter-spacing:0.1px;">5 hours ago</div>
<div class="r" style="left:26px;top:1306px;width:2262px;height:2px;background:#d3dae6;"></div>
<div class="r" style="left:0;top:1308px;width:2322px;height:78px;background:#fff"></div>
<div class="t" style="left:42.0px;top:1335.7px;font-size:24.7px;line-height:24.7px;font-weight:400;color:#343741;letter-spacing:0.31px;-webkit-text-stroke:0.6px currentColor;">Rows per page: 25</div>
<svg class="r" style="left:264px;top:1334px" width="40" height="28" viewBox="0 0 40 28" fill="none" stroke="#343741" stroke-width="2.2" stroke-linecap="round" stroke-linejoin="round">
<polyline points="10,9 19,18.5 28,9"/></svg>
<svg class="r" style="left:1830px;top:1320px" width="40" height="60" viewBox="0 0 40 60" fill="none" stroke="#98a2b3" stroke-width="2.8" stroke-linecap="round" stroke-linejoin="round">
<polyline points="24,16.7 14.3,27.9 24,39.2"/></svg>
<div class="t" style="left:1887.5px;top:1334.4px;font-size:29px;line-height:29px;font-weight:700;color:#0077cc;letter-spacing:0px;">1</div>
<div class="r" style="left:1889px;top:1363px;width:14px;height:3px;background:#0077cc;"></div>
<div class="t" style="left:1934.5px;top:1334.4px;font-size:29px;line-height:29px;font-weight:400;color:#343741;letter-spacing:0.4px;-webkit-text-stroke:0.6px currentColor;">2</div>
<div class="t" style="left:1984.5px;top:1334.4px;font-size:29px;line-height:29px;font-weight:400;color:#343741;letter-spacing:0.4px;-webkit-text-stroke:0.6px currentColor;">3</div>
<div class="t" style="left:2035.0px;top:1334.4px;font-size:29px;line-height:29px;font-weight:400;color:#343741;letter-spacing:0.4px;-webkit-text-stroke:0.6px currentColor;">4</div>
<div class="t" style="left:2085.0px;top:1334.4px;font-size:29px;line-height:29px;font-weight:400;color:#343741;letter-spacing:0.4px;-webkit-text-stroke:0.6px currentColor;">5</div>
<div class="t" style="left:2189.5px;top:1334.4px;font-size:29px;line-height:29px;font-weight:400;color:#343741;letter-spacing:1.4px;-webkit-text-stroke:0.6px currentColor;">20</div>
<svg class="r" style="left:2130px;top:1344px" width="30" height="20" viewBox="0 0 30 20" fill="#a2abba"><circle cx="7" cy="10" r="2.1"/><circle cx="15" cy="10" r="2.1"/><circle cx="23" cy="10" r="2.1"/></svg>
<svg class="r" style="left:2240px;top:1320px" width="40" height="60" viewBox="0 0 40 60" fill="none" stroke="#343741" stroke-width="2.8" stroke-linecap="round" stroke-linejoin="round">
<polyline points="17.5,16.7 27.5,28 17.5,39.5"/></svg>
</div>
<div class="frame"></div>
</body></html>
